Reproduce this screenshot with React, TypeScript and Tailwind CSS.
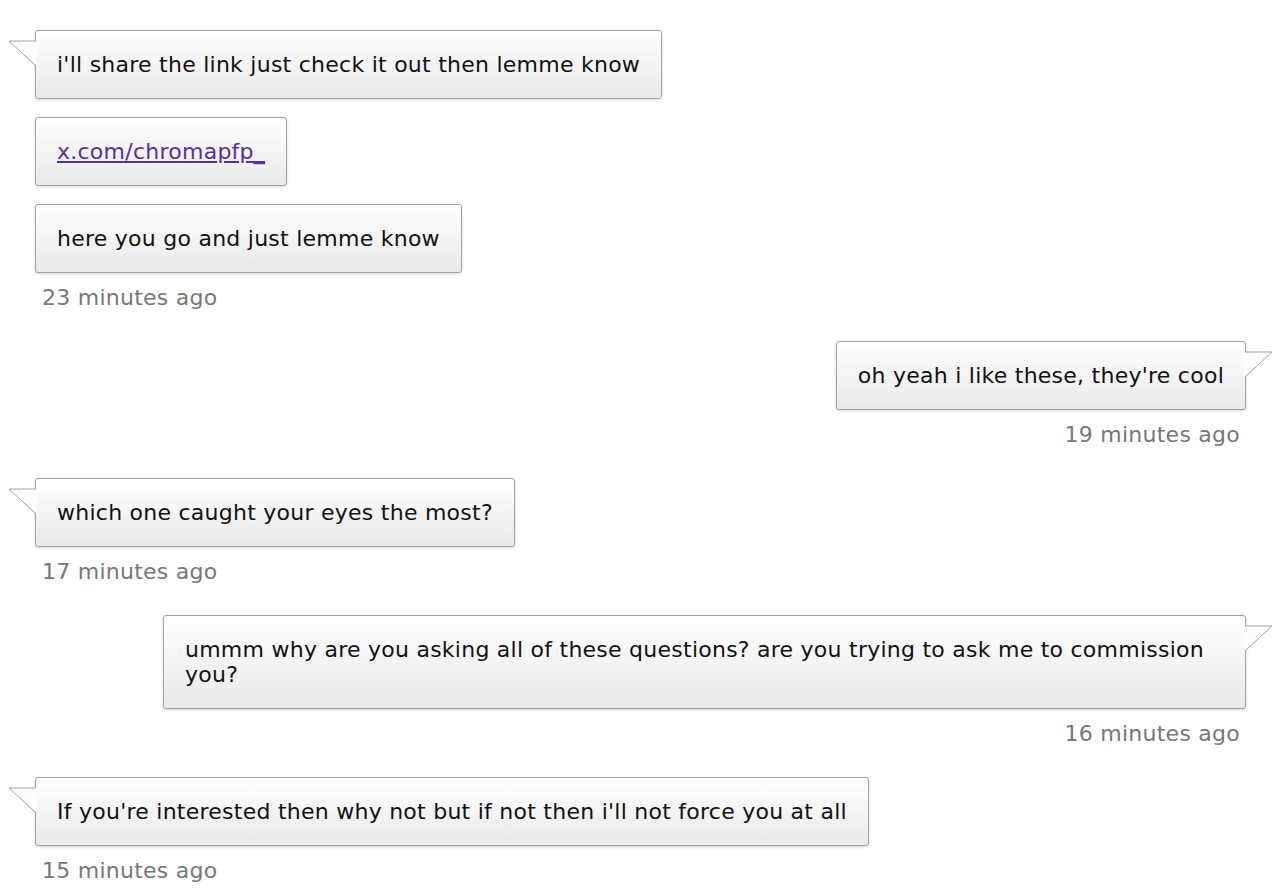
import React from "react";

type Msg = {
  side: "left" | "right";
  bubbles: { text: string; link?: boolean; tail?: boolean }[];
  time: string;
};

const messages: Msg[] = [
  {
    side: "left",
    bubbles: [
      { text: "i'll share the link just check it out then lemme know", tail: true },
      { text: "x.com/chromapfp_", link: true },
      { text: "here you go and just lemme know" },
    ],
    time: "23 minutes ago",
  },
  {
    side: "right",
    bubbles: [{ text: "oh yeah i like these, they're cool", tail: true }],
    time: "19 minutes ago",
  },
  {
    side: "left",
    bubbles: [{ text: "which one caught your eyes the most?", tail: true }],
    time: "17 minutes ago",
  },
  {
    side: "right",
    bubbles: [
      {
        text: "ummm why are you asking all of these questions? are you trying to ask me to commission you?",
        tail: true,
      },
    ],
    time: "16 minutes ago",
  },
  {
    side: "left",
    bubbles: [
      {
        text: "If you're interested then why not but if not then i'll not force you at all",
        tail: true,
      },
    ],
    time: "15 minutes ago",
  },
];

function Tail({ side }: { side: "left" | "right" }) {
  if (side === "left") {
    return (
      <svg
        className="absolute left-[-28px] top-[9px]"
        width="30"
        height="28"
        viewBox="0 0 30 28"
      >
        <polygon points="1,1 29,1 29,26" fill="#fcfcfc" />
        <polyline
          points="28,1 1,1 28,26"
          fill="none"
          stroke="#a3a3a3"
          strokeWidth="1"
        />
      </svg>
    );
  }
  return (
    <svg
      className="absolute right-[-28px] top-[9px]"
      width="30"
      height="28"
      viewBox="0 0 30 28"
    >
      <polygon points="29,1 1,1 1,26" fill="#fcfcfc" />
      <polyline
        points="2,1 29,1 2,26"
        fill="none"
        stroke="#a3a3a3"
        strokeWidth="1"
      />
    </svg>
  );
}

function Bubble({
  text,
  link,
  tail,
  side,
}: {
  text: string;
  link?: boolean;
  tail?: boolean;
  side: "left" | "right";
}) {
  return (
    <div className="relative max-w-[1083px] rounded-[3px] border border-[#a3a3a3] bg-gradient-to-b from-white to-[#e9e9e9] px-[21px] py-[21px] leading-[25px] text-[#111111] shadow-[0_1px_3px_rgba(0,0,0,0.18)]">
      {tail && <Tail side={side} />}
      {link ? (
        <a href="#" className="text-[#58309a] underline">
          {text}
        </a>
      ) : (
        <span>{text}</span>
      )}
    </div>
  );
}

export default function App() {
  return (
    <div
      className="min-h-screen bg-white pl-[35px] pr-[34px] pt-[30px] text-[22px] tracking-[0.25px]"
      style={{ fontFamily: '"DejaVu Sans", Verdana, sans-serif' }}
    >
      {messages.map((m, i) => (
        <div
          key={i}
          className={`mb-[31px] flex flex-col ${
            m.side === "left" ? "items-start" : "items-end"
          }`}
        >
          <div
            className={`flex flex-col gap-[18px] ${
              m.side === "left" ? "items-start" : "items-end"
            }`}
          >
            {m.bubbles.map((b, j) => (
              <Bubble key={j} {...b} side={m.side} />
            ))}
          </div>
          <div
            className={`mt-[13px] leading-[24px] text-[#777777] ${
              m.side === "left" ? "pl-[7px]" : "pr-[6px]"
            }`}
          >
            {m.time}
          </div>
        </div>
      ))}
    </div>
  );
}
